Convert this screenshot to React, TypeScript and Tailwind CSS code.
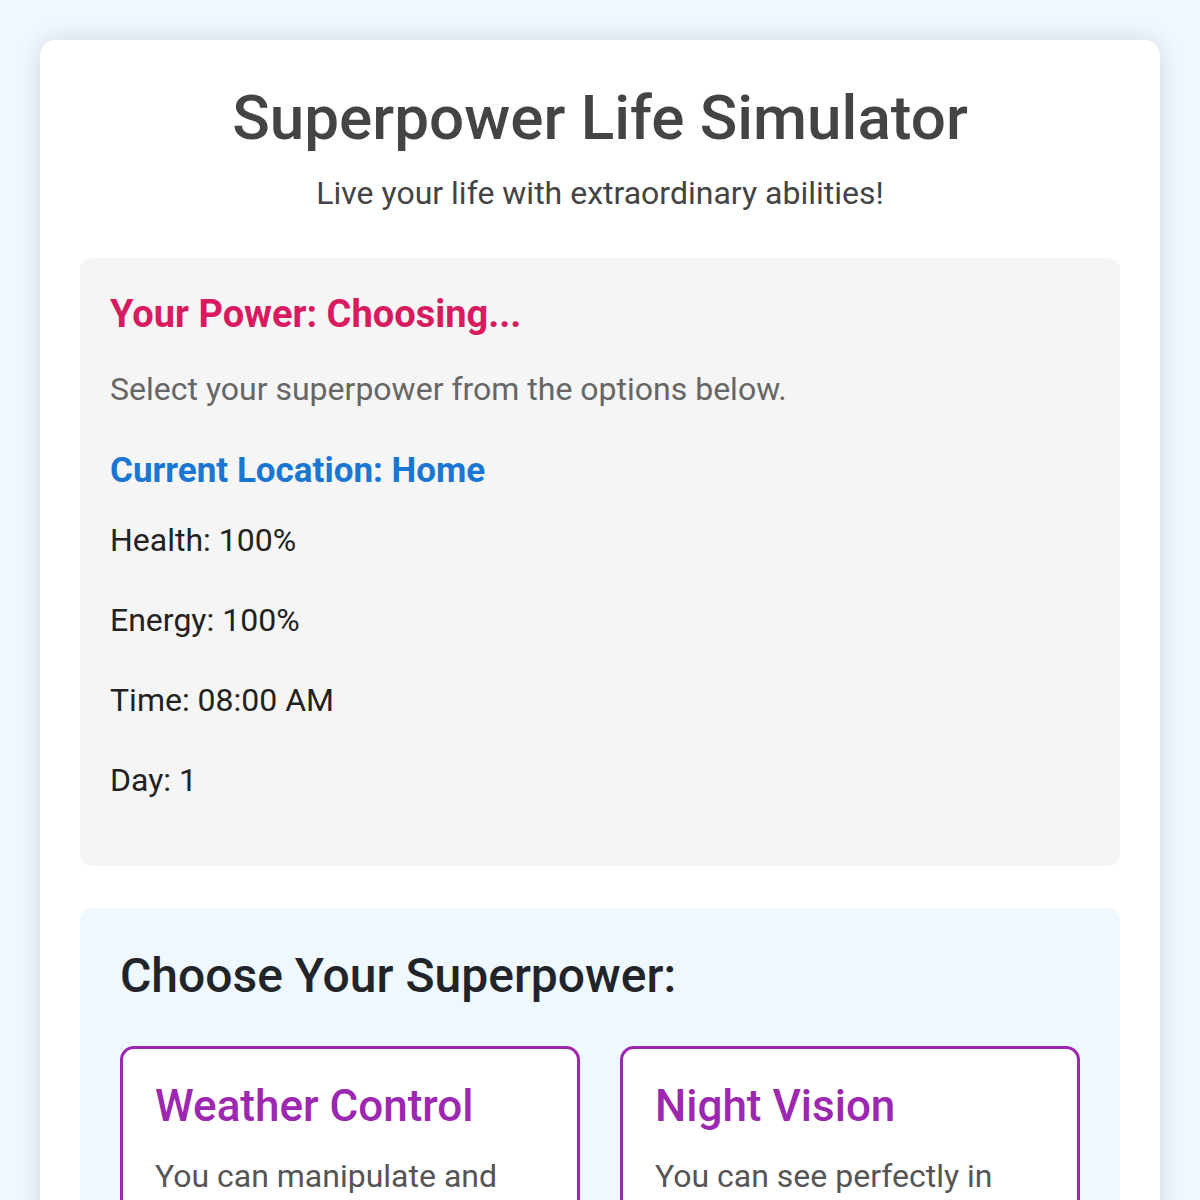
import React from "react";

const stats = ["Health: 100%", "Energy: 100%", "Time: 08:00 AM", "Day: 1"];

const powers = [
  { name: "Weather Control", desc: "You can manipulate and control the weather around you." },
  { name: "Night Vision", desc: "You can see perfectly in complete darkness." },
];

export default function App() {
  return (
    <div className="min-h-screen bg-[#f0f7ff] px-10 pt-10 pb-10 font-['Roboto',sans-serif]">
      <div className="rounded-2xl bg-white px-10 pt-[41px] pb-10 shadow-[0_0_24px_rgba(0,0,0,0.13)]">
        <h1 className="text-center text-[62px] leading-[1.2] font-medium text-[#444]">Superpower Life Simulator</h1>
        <p className="mt-[16px] text-center text-[32px] leading-[1.4] text-[#444]">Live your life with extraordinary abilities!</p>

        <section className="mt-[42px] rounded-xl bg-[#f5f5f5] px-[30px] pt-[34px] pb-[66px]">
          <h2 className="text-[38px] leading-[1.2] font-bold text-[#d81b60]">Your Power: Choosing...</h2>
          <p className="mt-[29px] text-[32px] leading-[1.4] text-[#666]">Select your superpower from the options below.</p>
          <h3 className="mt-[38px] text-[35px] leading-[1.2] font-bold text-[#1976d2]">Current Location: Home</h3>
          <div className="mt-[28px] flex flex-col gap-[40px]">
            {stats.map((s) => (
              <p key={s} className="text-[32px] leading-[40px] text-[#222]">{s}</p>
            ))}
          </div>
        </section>

        <section className="mt-[42px] rounded-xl bg-[#f0f8ff] px-10 pt-[39px] pb-10">
          <h2 className="text-[48px] leading-[1.2] font-medium text-[#212529]">Choose Your Superpower:</h2>
          <div className="mt-[42px] grid grid-cols-2 gap-10">
            {powers.map((p) => (
              <div key={p.name} className="rounded-[14px] border-[3px] border-[#9c27b0] bg-white px-8 pt-[31px] pb-8">
                <h3 className="text-[44px] leading-[1.2] font-medium text-[#9c27b0]">{p.name}</h3>
                <p className="mt-[19px] text-[32px] leading-[1.5] text-[#555]">{p.desc}</p>
              </div>
            ))}
          </div>
        </section>
      </div>
    </div>
  );
}
